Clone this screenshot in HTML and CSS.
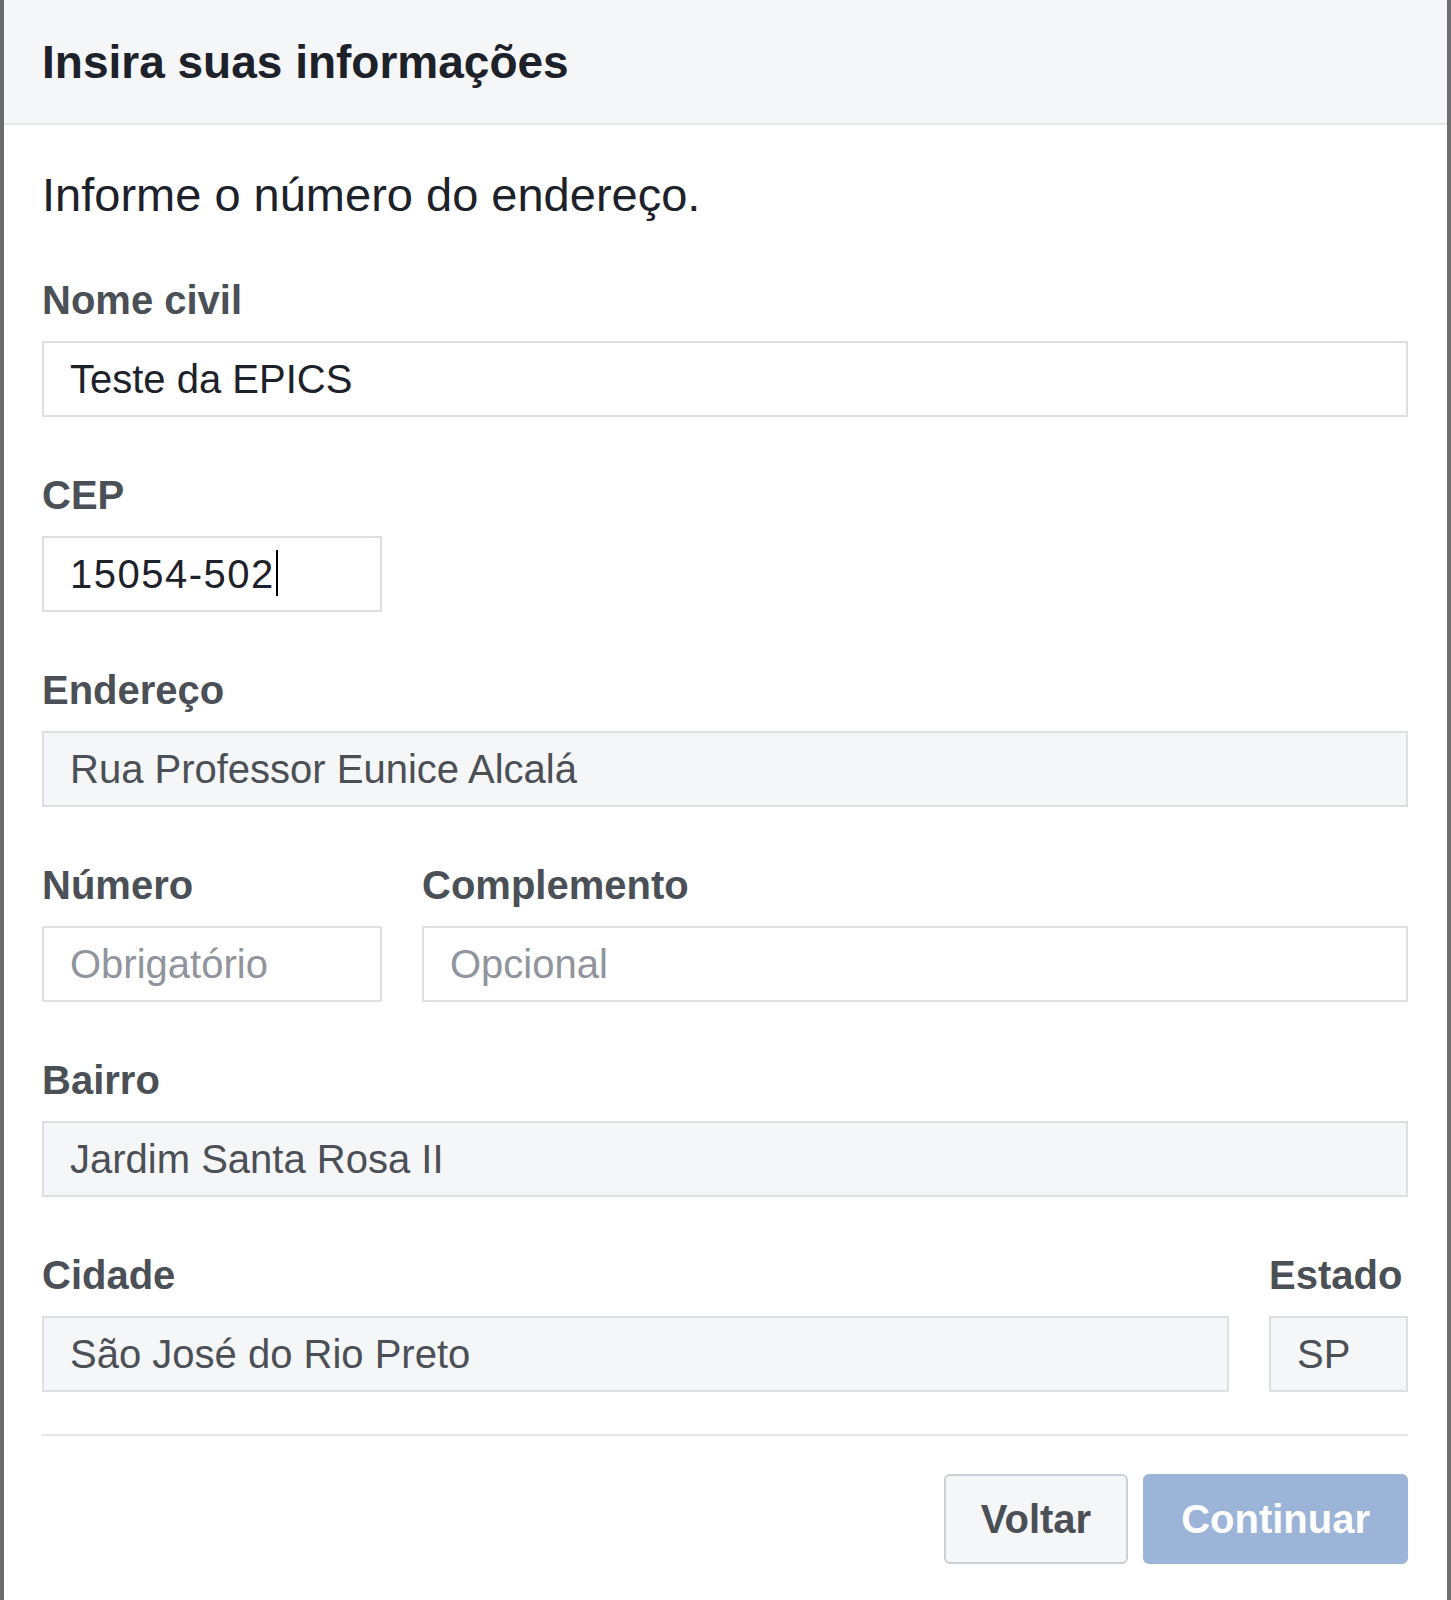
FILE: index.html
```html
<!DOCTYPE html>
<html lang="pt-BR">
<head>
<meta charset="utf-8">
<title>Insira suas informações</title>
<link rel="stylesheet" href="styles.css">
</head>
<body>
<div class="dialog">
  <div class="dialog-header">Insira suas informações</div>
  <div class="dialog-body">
    <p class="intro">Informe o número do endereço.</p>

    <div class="group">
      <div class="label">Nome civil</div>
      <div class="field">Teste da EPICS</div>
    </div>

    <div class="group">
      <div class="label">CEP</div>
      <div class="field field-short field-cep">15054-502<span class="caret"></span></div>
    </div>

    <div class="group">
      <div class="label">Endereço</div>
      <div class="field field-readonly">Rua Professor Eunice Alcalá</div>
    </div>

    <div class="row row-numero">
      <div class="group">
        <div class="label">Número</div>
        <div class="field field-placeholder">Obrigatório</div>
      </div>
      <div class="group">
        <div class="label">Complemento</div>
        <div class="field field-placeholder">Opcional</div>
      </div>
    </div>

    <div class="group">
      <div class="label">Bairro</div>
      <div class="field field-readonly">Jardim Santa Rosa II</div>
    </div>

    <div class="row row-cidade">
      <div class="group">
        <div class="label">Cidade</div>
        <div class="field field-readonly">São José do Rio Preto</div>
      </div>
      <div class="group">
        <div class="label">Estado</div>
        <div class="field field-readonly">SP</div>
      </div>
    </div>

    <div class="footer">
      <button class="btn btn-secondary" type="button">Voltar</button>
      <button class="btn btn-primary" type="button">Continuar</button>
    </div>
  </div>
</div>
</body>
</html>
```

FILE: styles.css
```css
* {
  box-sizing: border-box;
}

html, body {
  margin: 0;
  padding: 0;
  background: #ffffff;
}

body {
  font-family: "Liberation Sans", Arial, Helvetica, sans-serif;
  color: #1d2129;
}

.dialog {
  width: 1451px;
  min-height: 1600px;
  border-left: 4px solid #6a6a6a;
  border-right: 4px solid #6f6f6f;
  background: #ffffff;
}

.dialog-header {
  background: #f5f6f7;
  border-bottom: 2px solid #e5e6e9;
  padding: 36px 39px 35px 38px;
  font-size: 46px;
  line-height: 52px;
  font-weight: bold;
  color: #1d2129;
}

.dialog-body {
  padding: 0 39px 0 38px;
}

.intro {
  margin: 42px 0 0 0;
  font-size: 47px;
  line-height: 56px;
  color: #1d2129;
}

.group {
  margin-top: 54px;
}

.intro + .group {
  margin-top: 53px;
}

.row {
  display: flex;
  gap: 40px;
}

.row-numero .group:first-child {
  width: 340px;
  flex: none;
}

.row-numero .group:last-child {
  flex: 1;
}

.row-cidade .group:first-child {
  flex: 1;
}

.row-cidade .group:last-child {
  width: 139px;
  flex: none;
}

.label {
  font-size: 40px;
  line-height: 48px;
  font-weight: bold;
  color: #4b4f56;
  margin-bottom: 17px;
  white-space: nowrap;
}

.field {
  height: 76px;
  border: 2px solid #dddfe2;
  background: #ffffff;
  padding: 0 26px;
  font-size: 40px;
  line-height: 72px;
  color: #1d2129;
  white-space: nowrap;
  overflow: hidden;
}

.field-short {
  width: 340px;
}

.field-cep {
  letter-spacing: 1.5px;
}

.caret {
  display: inline-block;
  width: 2px;
  height: 46px;
  background: #000000;
  vertical-align: -8px;
  margin-left: 1px;
}

.field-readonly {
  background: #f5f6f7;
  color: #4b4f56;
}

.field-placeholder {
  color: #90949c;
}

.footer {
  margin-top: 42px;
  border-top: 2px solid #e5e6e9;
  padding-top: 38px;
  display: flex;
  justify-content: flex-end;
  gap: 15px;
}

.btn {
  height: 90px;
  border-radius: 6px;
  border: 2px solid #ccd0d5;
  padding: 0 35px;
  font-family: "Liberation Sans", Arial, Helvetica, sans-serif;
  font-size: 40px;
  line-height: 86px;
  font-weight: bold;
  cursor: pointer;
}

.btn-secondary {
  background: #f5f6f7;
  color: #4b4f56;
}

.btn-primary {
  background: #9cb4d8;
  border-color: #9cb4d8;
  color: #ffffff;
  padding: 0 36px;
}
```
